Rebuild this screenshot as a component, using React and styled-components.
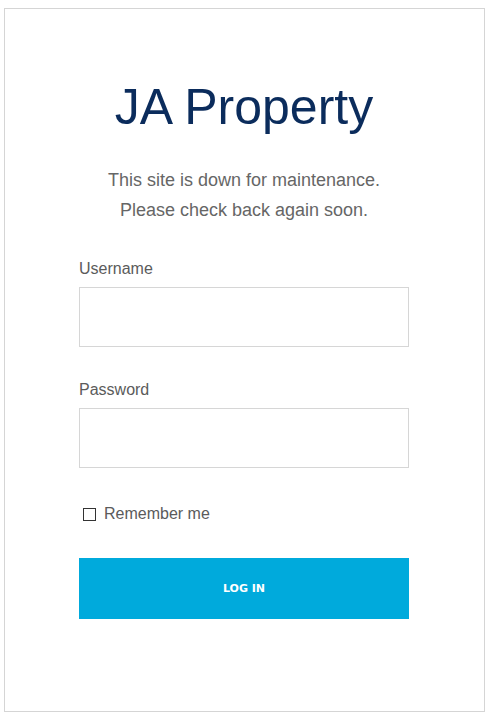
import React from "react";
import styled, { createGlobalStyle } from "styled-components";

const GlobalStyle = createGlobalStyle`
  html, body {
    margin: 0;
    padding: 0;
    background: #ffffff;
  }
  body {
    font-family: "Liberation Sans", Arial, sans-serif;
  }
`;

const Page = styled.div`
  padding: 8px 8px 6px 4px;
`;

const Panel = styled.div`
  width: 481px;
  height: 704px;
  box-sizing: border-box;
  border: 1px solid #d5d5d5;
  padding: 68px 75px 0 74px;
  display: flex;
  flex-direction: column;
`;

const Title = styled.h1`
  margin: 0;
  font-size: 50px;
  line-height: 60px;
  font-weight: 400;
  color: #0b2c5c;
  text-align: center;
`;

const Notice = styled.p`
  margin: 28px 0 0;
  font-size: 18px;
  line-height: 30px;
  color: #666666;
  text-align: center;
`;

const Form = styled.form`
  margin-top: 34px;
  display: flex;
  flex-direction: column;
`;

const Field = styled.div`
  display: flex;
  flex-direction: column;
  gap: 8px;
  margin-top: ${(p) => (p.first ? "0" : "33px")};
`;

const Label = styled.label`
  font-size: 16px;
  line-height: 20px;
  color: #5b5b5b;
`;

const Input = styled.input`
  height: 60px;
  box-sizing: border-box;
  border: 1px solid #d6d6d6;
  border-radius: 0;
  padding: 0 12px;
  font-size: 16px;
  font-family: inherit;
  outline: none;
`;

const CheckRow = styled.label`
  margin-top: 36px;
  display: flex;
  align-items: center;
  gap: 8px;
  padding-left: 4px;
  font-size: 16px;
  line-height: 20px;
  color: #5b5b5b;
`;

const Box = styled.span`
  width: 13px;
  height: 13px;
  box-sizing: border-box;
  border: 1px solid #333333;
  background: #ffffff;
`;

const Button = styled.button`
  margin-top: 34px;
  height: 61px;
  border: none;
  background: #00aadc;
  color: #ffffff;
  font-family: "DejaVu Sans", Verdana, sans-serif;
  font-weight: 700;
  font-size: 11px;
  cursor: pointer;
`;

export default function App() {
  return (
    <>
      <GlobalStyle />
      <Page>
        <Panel>
          <Title>JA Property</Title>
          <Notice>
            This site is down for maintenance.
            <br />
            Please check back again soon.
          </Notice>
          <Form onSubmit={(e) => e.preventDefault()}>
            <Field first>
              <Label htmlFor="user">Username</Label>
              <Input id="user" type="text" />
            </Field>
            <Field>
              <Label htmlFor="pass">Password</Label>
              <Input id="pass" type="password" />
            </Field>
            <CheckRow>
              <Box />
              Remember me
            </CheckRow>
            <Button type="submit">LOG IN</Button>
          </Form>
        </Panel>
      </Page>
    </>
  );
}
